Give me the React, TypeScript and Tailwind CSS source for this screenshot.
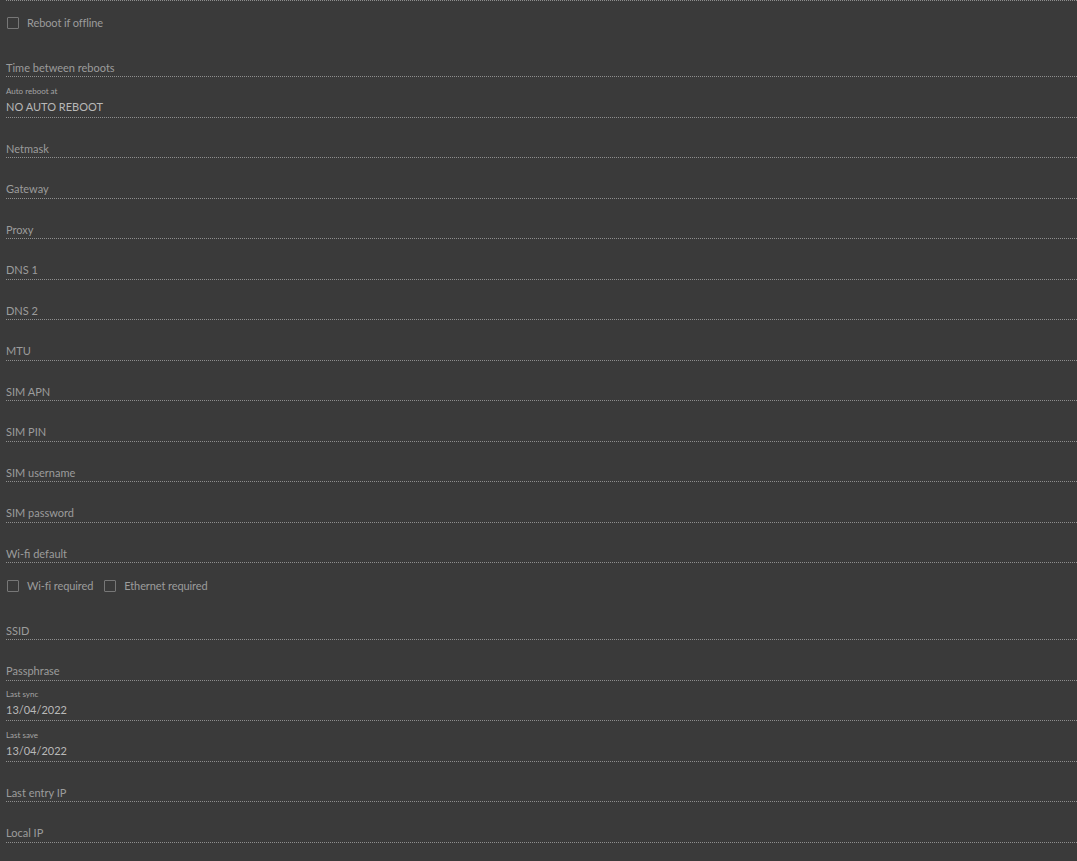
import React from "react";

const font = { fontFamily: "Lato, 'Open Sans', sans-serif" };

function Field({ label, small, value }: { label?: string; small?: string; value?: string }) {
  return (
    <div
      className={
        "h-[40.5px] flex flex-col justify-end border-b border-dotted border-[#8e8e8e] " +
        (value ? "pb-[3px]" : "pb-[1.5px]")
      }
    >
      {small && (
        <div className="text-[8px] leading-[10px] text-[#a4a4a4] mb-[4px]">{small}</div>
      )}
      {value ? (
        <div className="text-[11px] leading-[14px] text-[#b8b8b8]">{value}</div>
      ) : (
        <div className="text-[11px] leading-[14px] text-[#9c9c9c]">{label}</div>
      )}
    </div>
  );
}

function Check({ label }: { label: string }) {
  return (
    <div className="flex items-center gap-[8px]">
      <div className="w-[12px] h-[12px] border border-[#777] rounded-[1px] box-border" />
      <span className="text-[11px] leading-[14px] tracking-[-0.1px] text-[#9c9c9c]">{label}</span>
    </div>
  );
}

export default function App() {
  return (
    <div className="w-[1077px] h-[861px] bg-[#3a3a3a] overflow-hidden pl-[6px]" style={font}>
      <div className="h-px border-b border-dotted border-[#8e8e8e]" />
      <div className="h-[35.5px] flex items-center pl-px pb-[4px] pt-[12px]">
        <Check label="Reboot if offline" />
      </div>
      <Field label="Time between reboots" />
      <Field small="Auto reboot at" value="NO AUTO REBOOT" />
      <Field label="Netmask" />
      <Field label="Gateway" />
      <Field label="Proxy" />
      <Field label="DNS 1" />
      <Field label="DNS 2" />
      <Field label="MTU" />
      <Field label="SIM APN" />
      <Field label="SIM PIN" />
      <Field label="SIM username" />
      <Field label="SIM password" />
      <Field label="Wi-fi default" />
      <div className="h-[36.5px] flex items-center gap-[11px] pl-px pb-[4px] pt-[13px]">
        <Check label="Wi-fi required" />
        <Check label="Ethernet required" />
      </div>
      <Field label="SSID" />
      <Field label="Passphrase" />
      <Field small="Last sync" value="13/04/2022" />
      <Field small="Last save" value="13/04/2022" />
      <Field label="Last entry IP" />
      <Field label="Local IP" />
    </div>
  );
}
